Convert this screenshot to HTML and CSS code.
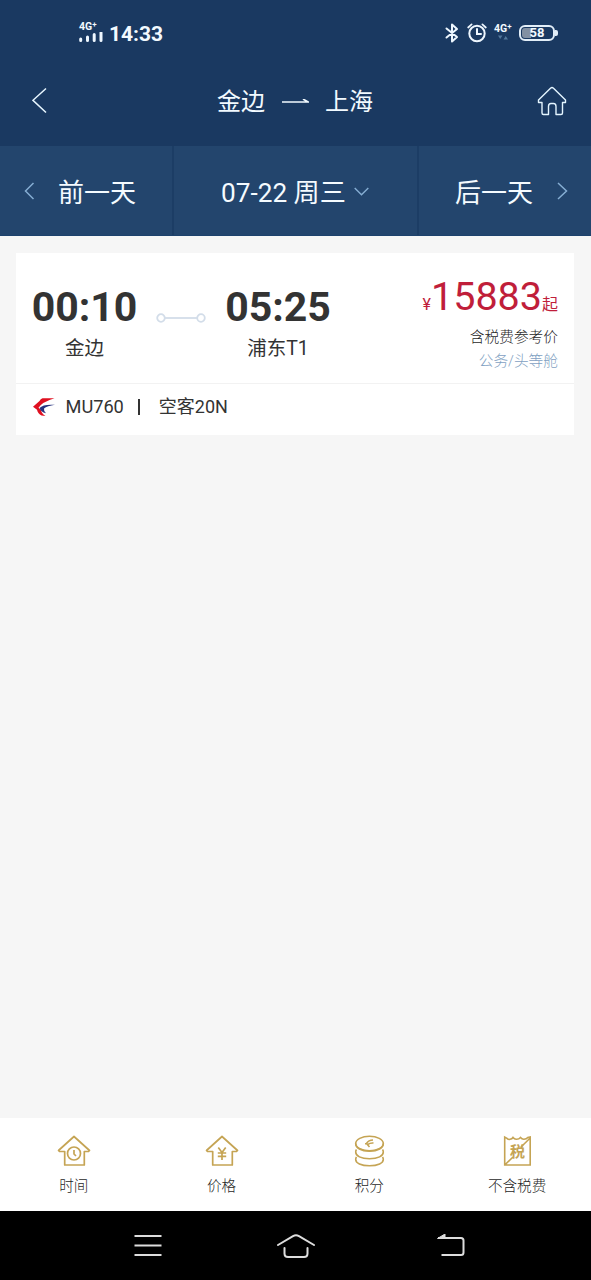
FILE: index.html
```
<!DOCTYPE html>
<html lang="zh-CN">
<head>
<meta charset="utf-8">
<title>航班列表</title>
<link rel="stylesheet" href="styles.css">
</head>
<body>
<div class="screen">
  <header class="top">
    <div class="status">
      <div class="signal">
        <span class="net">4G<sup>+</sup></span>
        <svg width="24" height="12" viewBox="0 0 24 12" fill="none" stroke="#eef7ff" stroke-width="3" stroke-linecap="round"><path d="M1.700 7V8.400M8.500 5V8.400M15.200 2.500V8.400M22 .7V8.400"/></svg>
      </div>
      <span class="clock">14:33</span>
      <div class="status-icons">
        <svg class="bt" width="14" height="20" viewBox="0 0 14 20" fill="none" stroke="#eef7ff" stroke-width="2" stroke-linejoin="round" stroke-linecap="round"><path d="M1.500 5.500 12 14 7 18.500V1.500L12 6 1.500 14.500"/></svg>
        <svg class="alarm" width="20" height="20" viewBox="0 0 20 20" fill="none" stroke="#eef7ff" stroke-width="2" stroke-linecap="round"><circle cx="10" cy="10.500" r="7.700"/><path d="M10 6V11H14"/><path d="M1.200 4.500 4.600 1.400M18.800 4.500 15.400 1.400" stroke-width="1.700"/></svg>
        <span class="data"><span class="net">4G<sup>+</sup></span>
          <svg width="10" height="5" viewBox="0 0 10 5" fill="#52779a"><path d="M0 .5H4.500L2.200 4ZM5.500 4.500H10L7.700 1Z"/></svg></span>
        <span class="battery"><span class="cell"><span class="charge">58</span></span><span class="tip"></span></span>
      </div>
    </div>
    <div class="titlebar">
      <svg class="back" width="16" height="27" viewBox="0 0 16 27" fill="none" stroke="#e8f7ff" stroke-width="1.500"><path d="M14 1.500 1 13.300 14 25.500"/></svg>
      <h1 class="route"><span>金边</span><svg width="28" height="6" viewBox="0 0 28 6" fill="none" stroke="#f2faff" stroke-width="1.700"><path d="M1 3H27L22 0"/></svg><span>上海</span></h1>
      <svg class="home" width="30" height="30" viewBox="0 0 30 30" fill="none" stroke="#e4f5ff" stroke-width="1.400" stroke-linejoin="round"><path d="M15 1.500Q15.700 1.500 16.500 2.200L28.500 14V16.500H25.500V27Q25.500 28.500 24 28.500H19V20.500Q19 17.500 16.500 17.500H14Q11.500 17.500 11.500 20.500V28.500H6.500Q5 28.500 5 27V16.500H1.500V14L13.500 2.200Q14.300 1.500 15 1.500Z"/></svg>
    </div>
  </header>
  <nav class="days">
    <div class="day prev"><svg width="11" height="18" viewBox="0 0 11 18" fill="none" stroke="#86aed3" stroke-width="1.500"><path d="M9.500 1 1.500 9 9.500 17"/></svg><span>前一天</span></div>
    <div class="day current"><span>07-22 周三</span><svg width="15" height="9" viewBox="0 0 15 9" fill="none" stroke="#86aed3" stroke-width="1.400"><path d="M.7 1 7.500 7.700 14.300 1"/></svg></div>
    <div class="day next"><span>后一天</span><svg width="11" height="18" viewBox="0 0 11 18" fill="none" stroke="#86aed3" stroke-width="1.500"><path d="M1 1 9.500 9 1 17"/></svg></div>
  </nav>
  <main class="list">
    <article class="flight">
      <div class="summary">
        <div class="stop"><b>00:10</b><span>金边</span></div>
        <svg class="leg" width="50" height="10" viewBox="0 0 50 10" fill="none" stroke="#d3dde9" stroke-width="1.800"><circle cx="5" cy="5" r="3.800"/><circle cx="45" cy="5" r="3.800"/><path d="M9 5H41"/></svg>
        <div class="stop"><b>05:25</b><span>浦东T1</span></div>
        <div class="fare">
          <div class="price"><span class="yen">¥</span><span class="amount">15883</span><span class="from">起</span></div>
          <div class="note">含税费参考价</div>
          <div class="cabin">公务/头等舱</div>
        </div>
      </div>
      <div class="carrier">
        <svg width="22" height="18" viewBox="0 0 22 18"><path d="M21.500 .2H9.500Q7.500 1 6.500 3L0 8.700 4 11.800Q5 16 8.500 17.500L12.500 18Q8.500 15.500 8 12L5.500 9.700Q9 4 21.500 .2Z" fill="#df1020"/><path d="M22 6.800Q10 6 6.500 10 7.500 14 13 15.200 10.500 13 11 10.500 14 8 22 6.800Z" fill="#26327e"/></svg>
        <span class="number">MU760</span><i class="bar"></i><span class="plane">空客20N</span>
      </div>
    </article>
  </main>
  <nav class="tabs">
    <div class="tab"><svg width="34" height="32" viewBox="0 0 34 32" fill="none" stroke="#c5a454" stroke-width="1.700" stroke-linejoin="round"><path d="M17 1.500 32.500 15.500 31.500 16.500H27.300V30H7.700V16.500H2.500L1.500 15.500Z"/><circle cx="17" cy="18.500" r="6.500"/><path d="M17 15V19L19 21"/></svg><span>时间</span></div>
    <div class="tab"><svg width="34" height="32" viewBox="0 0 34 32" fill="none" stroke="#c5a454" stroke-width="1.700" stroke-linejoin="round"><path d="M17 1.500 32.500 15.500 31.500 16.500H27.300V30H7.700V16.500H2.500L1.500 15.500Z"/><path d="M13.300 12.500 17 17.500 20.700 12.500M17 17.500V25M12.800 18H21.200M12.800 21.300H21.200"/></svg><span>价格</span></div>
    <div class="tab"><svg width="34" height="32" viewBox="0 0 34 32" fill="none" stroke="#c5a454" stroke-width="1.600"><ellipse cx="17.500" cy="8.500" rx="13.800" ry="7.300"/><path d="M3.700 8.500C3.700 13 9 16.200 17.500 16.200S31.300 13 31.300 8.500M4.500 14.500Q3.700 15.500 3.700 17C3.700 21 9 23.800 17.500 23.800S31.300 21 31.300 17Q31.300 15.500 30.500 14.500M4.500 22Q3.700 23 3.700 24.500C3.700 28 9 30.800 17.500 30.800S31.300 28 31.300 24.500Q31.300 23 30.500 22"/><path d="M21 5Q16.500 5 14.500 8.500L17.500 12M13 8.700H15M21.500 8Q18 7.700 16 9.300" stroke-width="1.600"/></svg><span>积分</span></div>
    <div class="tab"><svg width="34" height="32" viewBox="0 0 34 32" fill="none" stroke="#c5a454" stroke-width="1.600"><path d="M4.700 30V2L6.500 3Q8 5 10 4.300 12 4 13 2.500 14.500 4.500 16.500 4.300 19 4.300 20.500 2.500 22 4.500 24 4.300 26.500 4.300 27.800 2.500L30.200 2V30ZM4.700 30 13 22M21 12 30.200 3"/><text class="tax-glyph" x="17.500" y="22" text-anchor="middle">税</text></svg><span>不含税费</span></div>
  </nav>
  <nav class="sysnav">
    <svg width="28" height="24" viewBox="0 0 28 24" fill="none" stroke="#ddd" stroke-width="2"><path d="M.5 2H27.500M.5 11.500H27.500M.5 21H27.500"/></svg>
    <svg class="sys-home" width="40" height="26" viewBox="0 0 40 26" fill="none" stroke="#ddd" stroke-width="2" stroke-linecap="round"><path d="M2 12 17 3.200Q20 1.500 23 3.200L38 12M8.500 15V20.500Q8.500 24 12 24H28Q31.500 24 31.500 20.500V15"/></svg>
    <svg width="28" height="24" viewBox="0 0 28 24" fill="none" stroke="#ddd" stroke-width="2"><path d="M1 4H24Q26.500 4 26.500 6.500V18.500Q26.500 21 24 21H4.500"/><path d="M.5 4.500 8 0V4.500Z" fill="#ddd" stroke-width="1"/></svg>
  </nav>
</div>
</body>
</html>
```
FILE: styles.css
```
* { box-sizing: border-box; margin: 0; padding: 0; }
body { font-family: Roboto, "Noto Sans CJK SC", sans-serif; background: #f6f6f6; color: #333; }
svg { display: block; flex: none; }
.screen { width: 591px; height: 1280px; display: flex; flex-direction: column; overflow: hidden; }

.top { height: 146px; background: #1a3961; color: #f2faff; }
.status { height: 66px; padding: 0 33px 0 79px; display: flex; align-items: center; }
.signal { width: 24px; height: 22px; }
.net { display: block; height: 10px; font-size: 10.500px; line-height: 10px; font-weight: 700; white-space: nowrap; }
.net sup { font-size: 8px; line-height: 0; vertical-align: 3px; }
.clock { margin-left: 6px; padding-top: 1px; font-size: 21px; font-weight: 700; }
.status-icons { margin-left: auto; display: flex; align-items: center; }
.alarm { margin-left: 8px; }
.data { margin-left: 7px; width: 18px; height: 18px; }
.data svg { margin: 1px 0 0 4px; }
.battery { margin-left: 7px; display: flex; align-items: center; }
.cell { width: 36px; height: 16px; border: 2px solid #e2eef8; border-radius: 6px; padding: 1px; }
.charge { display: block; height: 10px; font-size: 13px; line-height: 10px; font-weight: 700; text-align: center; border-radius: 3px; background: linear-gradient(90deg, #8290a2 0 9px, transparent 9px); }
.tip { width: 3px; height: 6px; background: #e2eef8; border-radius: 0 2px 2px 0; }

.titlebar { height: 79px; padding: 0 24px 10px 32px; display: flex; align-items: center; justify-content: space-between; }
.route { display: flex; align-items: center; gap: 16px; font-size: 24px; line-height: 32px; font-weight: 400; margin: 3px 0 0 5px; }

.days { height: 90px; display: grid; grid-template-columns: 172px 245px 174px; background: #23456d; color: #f5fbff; font-size: 26px; border-bottom: 1px solid #1d426d; }
.day { display: flex; align-items: center; padding-top: 1px; }
.day span { margin-top: -1px; }
.day + .day { border-left: 2px solid #1c3d65; }
.day.prev { padding-left: 24px; gap: 23px; }
.day.current { padding-left: 47px; gap: 8px; font-size: 26.200px; }
.day.next { padding-left: 36px; gap: 24px; }

.list { flex: 1; padding: 17px 17px 0 16px; }
.flight { height: 182px; background: #fff; }
.summary { height: 131px; padding: 0 16px; display: flex; border-bottom: 1px solid #f2f2f2; }
.stop { width: 105px; padding-top: 30px; display: flex; flex-direction: column; align-items: center; white-space: nowrap; }
.stop + .leg + .stop { width: 106px; }
.stop b { font-size: 41px; line-height: 48px; }
.stop span { font-size: 19.500px; line-height: 35px; }
.leg { margin: 60px 19px 0 19px; }
.fare { margin-left: auto; padding-top: 20px; text-align: right; }
.price { height: 51px; line-height: 48px; color: #c01e3a; white-space: nowrap; }
.yen { font-size: 16px; }
.amount { font-size: 39.500px; }
.from { font-size: 16px; }
.note { font-size: 14.700px; line-height: 26px; color: #1f1f1f; font-weight: 300; }
.cabin { font-size: 14.700px; line-height: 22px; color: #7f9fc2; font-weight: 300; }
.carrier { height: 51px; padding: 0 0 5px 17px; display: flex; align-items: center; font-size: 18px; }
.number { margin: 0 0 1px 10.500px; font-size: 18.200px; }
.bar { width: 2px; height: 16px; margin: 0 19px 0 14px; background: #333; }
.plane { line-height: 24px; margin-bottom: 1px; }

.tabs { height: 93px; background: #fff; display: grid; grid-template-columns: repeat(4, 1fr); }
.tab { padding-top: 17px; display: flex; flex-direction: column; align-items: center; color: #1f1f1f; font-size: 14.600px; line-height: 38px; font-weight: 300; }
.tax-glyph { font-family: "Noto Sans CJK SC", sans-serif; font-size: 15px; font-weight: 700; fill: #c5a454; stroke: none; }
.sysnav { height: 69px; background: #000; padding: 0 126px 0 134px; display: flex; align-items: center; justify-content: space-between; }
.sys-home { margin-right: 8px; }
```
